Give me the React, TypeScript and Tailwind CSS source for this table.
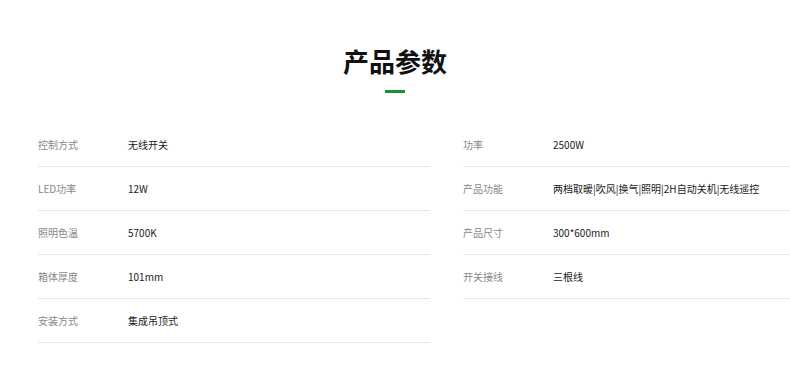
const left: Array<[string, string]> = [
  ["控制方式", "无线开关"],
  ["LED功率", "12W"],
  ["照明色温", "5700K"],
  ["箱体厚度", "101mm"],
  ["安装方式", "集成吊顶式"],
];

const right: Array<[string, string]> = [
  ["功率", "2500W"],
  ["产品功能", "两档取暖|吹风|换气|照明|2H自动关机|无线遥控"],
  ["产品尺寸", "300*600mm"],
  ["开关接线", "三根线"],
];

function SpecRow({ label, value }: { label: string; value: string }) {
  return (
    <div className="flex h-[44px] items-center border-b border-[#e6e6e6] text-[10px]">
      <span className="w-[90px] shrink-0 text-[#888]">{label}</span>
      <span className="whitespace-nowrap text-[#1a1a1a]">{value}</span>
    </div>
  );
}

export default function App() {
  return (
    <div
      className="h-[373px] w-full overflow-hidden bg-white pt-[43px]"
      style={{ fontFamily: '"Noto Sans CJK SC", "Noto Sans", sans-serif' }}
    >
      <h1 className="text-center text-[26px] font-bold leading-[36px] text-[#111]">产品参数</h1>
      <div className="mx-auto mt-[11px] h-[3px] w-[20px] bg-[#1a9337]" />
      <div className="mt-[30px] flex gap-[33px] pl-[38px]">
        <div className="w-[392px] shrink-0">
          {left.map(([l, v]) => (
            <SpecRow key={l} label={l} value={v} />
          ))}
        </div>
        <div className="w-[392px] shrink-0">
          {right.map(([l, v]) => (
            <SpecRow key={l} label={l} value={v} />
          ))}
        </div>
      </div>
    </div>
  );
}
